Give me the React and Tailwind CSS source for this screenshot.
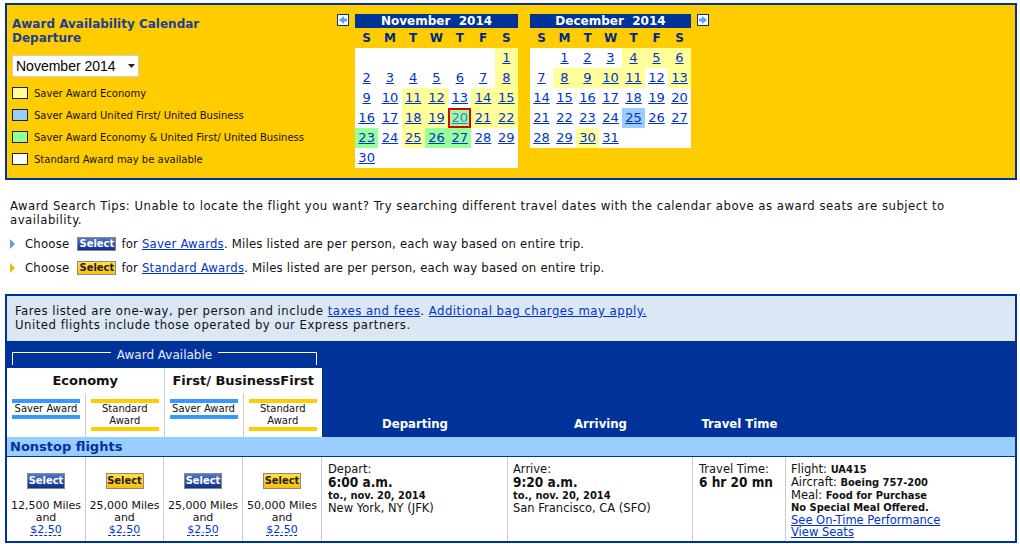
import React from 'react';

const verdana = "font-['DejaVu_Sans',Verdana,sans-serif]";
const tahoma = "font-['DejaVu_Sans_Condensed','DejaVu_Sans',sans-serif]";

const cellBg = { y: 'bg-[#ffff99]', g: 'bg-[#99ff99]', b: 'bg-[#99ccff]' };

const novColors = { 1: 'y', 8: 'y', 11: 'y', 12: 'y', 14: 'y', 15: 'y', 18: 'y', 19: 'y', 20: 'g', 21: 'y', 22: 'y', 23: 'g', 25: 'y', 26: 'g', 27: 'g' };
const decColors = { 4: 'y', 5: 'y', 6: 'y', 8: 'y', 9: 'y', 10: 'y', 11: 'y', 13: 'y', 25: 'b', 30: 'y' };

const NavArrow = ({ dir }) => (
  <svg width="12" height="12" viewBox="0 0 12 12" className="shrink-0">
    <rect x="0.5" y="0.5" width="11" height="11" fill="#ffffff" stroke="#003399" />
    {dir === 'left' ? (
      <polygon points="2,6 7,2 7,4.5 10,4.5 10,7.5 7,7.5 7,10" fill="#6699ff" />
    ) : (
      <polygon points="10,6 5,2 5,4.5 2,4.5 2,7.5 5,7.5 5,10" fill="#6699ff" />
    )}
  </svg>
);

const Month = ({ title, startDay, days, rows, colors, outline, width }) => {
  const cells = [];
  for (let i = 0; i < rows * 7; i++) {
    const d = i - startDay + 1;
    cells.push(d >= 1 && d <= days ? d : null);
  }
  return (
    <div className={width}>
      <div className={`h-[14px] bg-[#003399] text-white text-[12px] font-bold leading-[14px] text-center whitespace-pre ${verdana}`}>
        {title}
      </div>
      <div className={`grid grid-cols-7 h-[20px] items-center text-[12px] font-bold text-[#002a80] text-center ${verdana}`}>
        {['S', 'M', 'T', 'W', 'T', 'F', 'S'].map((n, i) => (
          <span key={i}>{n}</span>
        ))}
      </div>
      <div className={`grid grid-cols-7 bg-white ${verdana}`}>
        {cells.map((d, i) => {
          const marked = d !== null && d === outline;
          return (
            <div
              key={i}
              className={`h-[20px] text-center text-[13px] leading-[20px] ${d && colors[d] ? cellBg[colors[d]] : 'bg-white'} ${marked ? 'shadow-[inset_0_0_0_2px_#e00000]' : ''}`}
            >
              {d && <a className={`underline ${marked ? 'text-[#4a6fd6]' : 'text-[#0033cc]'}`}>{d}</a>}
            </div>
          );
        })}
      </div>
    </div>
  );
};

const Legend = ({ color, label }) => (
  <div className="flex items-center h-[22px] gap-[6px]">
    <span className={`w-[16px] h-[12px] border border-[#222] ${color}`} />
    <span className={`text-[10px] text-[#111] ${verdana}`}>{label}</span>
  </div>
);

const SelectBtn = ({ kind, small }) => {
  const base = small
    ? 'w-[39px] h-[14px] text-[11px] leading-[12px] ml-[8px] mr-[5px]'
    : 'w-[38px] h-[16px] text-[11px] leading-[14px]';
  const look =
    kind === 'blue'
      ? 'bg-linear-to-b from-[#5577c8] to-[#0d2f8f] text-white'
      : 'bg-linear-to-b from-[#ffe040] to-[#ffbf00] text-[#222]';
  return (
    <span className={`inline-block align-middle border border-[#8a8a8a] text-center font-bold tracking-normal ${tahoma} ${base} ${look}`}>
      Select
    </span>
  );
};

const Bar = ({ color }) => <div className={`h-[4px] ${color}`} />;

const MilesCell = ({ kind, miles }) => (
  <div className="flex flex-col items-center pt-[16px] border-r border-[#cccccc]">
    <SelectBtn kind={kind} />
    <div className={`mt-[11px] text-[11px] leading-[12px] text-center text-[#111] ${verdana}`}>
      <div>{miles} Miles</div>
      <div>and</div>
      <div className="text-[#0033cc] underline decoration-dashed underline-offset-2">$2.50</div>
    </div>
  </div>
);

const AwardSub = () => (
  <div className="flex-1 grid grid-cols-[79px_1fr]">
    <div className="border-r border-[#cccccc] px-[5px] pt-[5px] text-[10px] leading-[12px] text-center text-[#111]">
      <Bar color="bg-[#3399ff]" />
      <div>Saver Award</div>
      <Bar color="bg-[#3399ff]" />
    </div>
    <div className="px-[5px] pt-[5px] text-[10px] leading-[12px] text-center text-[#111]">
      <Bar color="bg-[#ffcc00]" />
      <div>Standard</div>
      <div>Award</div>
      <Bar color="bg-[#ffcc00]" />
    </div>
  </div>
);

const App = () => {
  return (
    <div className="w-[1020px] h-[544px] bg-white overflow-hidden">
      {/* award calendar */}
      <div className="ml-[5px] mt-[3px] w-[1012px] h-[177px] border-2 border-[#003399] bg-[#ffcc00] flex">
        <div className="w-[323px] pl-[5px] pt-[12px]">
          <div className={`text-[12px] font-bold leading-[14px] text-[#1c3f94] ${verdana}`}>
            <div>Award Availability Calendar</div>
            <div>Departure</div>
          </div>
          <div className="mt-[10px] w-[127px] h-[22px] bg-white border border-[#cfcfcf] flex items-center justify-between pl-[3px] pr-[3px]">
            <span className="text-[14px] text-black font-['Liberation_Sans',Arial,sans-serif]">November 2014</span>
            <svg width="7" height="4" viewBox="0 0 7 4">
              <polygon points="0,0 7,0 3.5,4" fill="#222" />
            </svg>
          </div>
          <div className="mt-[5px]">
            <Legend color="bg-[#ffff99]" label="Saver Award Economy" />
            <Legend color="bg-[#99ccff]" label="Saver Award United First/ United Business" />
            <Legend color="bg-[#99ff99]" label="Saver Award Economy & United First/ United Business" />
            <Legend color="bg-white" label="Standard Award may be available" />
          </div>
        </div>
        <div className="flex items-start pt-[9px]">
          <div className="ml-[7px]">
            <NavArrow dir="left" />
          </div>
          <div className="ml-[6px]">
            <Month title="November  2014" startDay={6} days={30} rows={6} colors={novColors} outline={20} width="w-[163px]" />
          </div>
          <div className="ml-[12px]">
            <Month title="December  2014" startDay={1} days={31} rows={5} colors={decColors} outline={null} width="w-[161px]" />
          </div>
          <div className="ml-[6px]">
            <NavArrow dir="right" />
          </div>
        </div>
      </div>

      {/* tips */}
      <div className={`pl-[10px] pr-[50px] mt-[19px] text-[13px] leading-[14px] text-[#111] ${tahoma}`}>
        <p className="tracking-[0.5px]">
          Award Search Tips: Unable to locate the flight you want? Try searching different travel dates with the calendar above as award seats are subject to availability.
        </p>
        <div className="mt-[7px] flex items-center h-[20px] tracking-[0.2px]">
          <svg width="6" height="10" viewBox="0 0 6 10" className="mr-[9px]">
            <polygon points="0,0 5,5 0,10" fill="#6f95e8" />
          </svg>
          <span>Choose</span>
          <SelectBtn kind="blue" small />
          <span>for <a className="text-[#0033cc] underline">Saver Awards</a>. Miles listed are per person, each way based on entire trip.</span>
        </div>
        <div className="mt-[4px] flex items-center h-[20px] tracking-[0.2px]">
          <svg width="6" height="10" viewBox="0 0 6 10" className="mr-[9px]">
            <polygon points="0,0 5,5 0,10" fill="#f5b800" />
          </svg>
          <span>Choose</span>
          <SelectBtn kind="yellow" small />
          <span>for <a className="text-[#0033cc] underline">Standard Awards</a>. Miles listed are per person, each way based on entire trip.</span>
        </div>
      </div>

      {/* results table */}
      <div className="ml-[5px] mt-[16px] w-[1012px] border-2 border-[#003399]">
        <div className={`h-[45px] bg-[#dce7f5] pl-[8px] pt-[8px] text-[13px] leading-[14px] tracking-[0.5px] text-[#111] ${tahoma}`}>
          <div>
            Fares listed are one-way, per person and include <a className="text-[#0033cc] underline">taxes and fees</a>.{' '}
            <a className="text-[#0033cc] underline">Additional bag charges may apply.</a>
          </div>
          <div>United flights include those operated by our Express partners.</div>
        </div>

        <div className="h-[96px] bg-[#003399] flex">
          <div className="w-[315px] flex flex-col">
            <div className="h-[27px] px-[5px] pt-[11px] flex items-start">
              <div className="flex-1 h-[13px] border-t border-l border-white" />
              <span className={`px-[6px] -mt-[4px] text-[12px] leading-[14px] text-[#e6ecff] ${verdana}`}>Award Available</span>
              <div className="flex-1 h-[13px] border-t border-r border-white" />
            </div>
            <div className={`flex-1 bg-white grid grid-cols-2 ${verdana}`}>
              <div className="flex flex-col border-r border-[#cccccc]">
                <div className="h-[26px] flex items-center justify-center text-[13px] font-bold text-[#111]">Economy</div>
                <AwardSub />
              </div>
              <div className="flex flex-col">
                <div className="h-[26px] flex items-center justify-center text-[13px] font-bold text-[#111]">First/ BusinessFirst</div>
                <AwardSub />
              </div>
            </div>
          </div>
          <div className={`flex-1 grid grid-cols-[186px_185px_93px_1fr] items-end pb-[4px] text-[13px] font-bold text-white ${tahoma}`}>
            <div className="text-center">Departing</div>
            <div className="text-center">Arriving</div>
            <div className="text-center">Travel Time</div>
            <div />
          </div>
        </div>

        <div className={`h-[20px] bg-[#99ccff] border-b border-[#003399] pl-[3px] text-[13px] leading-[19px] font-bold text-[#003399] ${verdana}`}>
          Nonstop flights
        </div>

        <div className="h-[84px] grid grid-cols-[79px_78px_79px_79px_186px_185px_93px_1fr]">
          <MilesCell kind="blue" miles="12,500" />
          <MilesCell kind="yellow" miles="25,000" />
          <MilesCell kind="blue" miles="25,000" />
          <MilesCell kind="yellow" miles="50,000" />
          <div className={`border-r border-[#cccccc] pl-[6px] pt-[6px] text-[11.5px] leading-[12px] text-[#111] ${verdana}`}>
            <div>Depart:</div>
            <div className={`text-[13.5px] leading-[15px] font-bold ${tahoma}`}>6:00 a.m.</div>
            <div className={`text-[11px] font-bold ${tahoma}`}>to., nov. 20, 2014</div>
            <div>New York, NY (JFK)</div>
          </div>
          <div className={`border-r border-[#cccccc] pl-[5px] pt-[6px] text-[11.5px] leading-[12px] text-[#111] ${verdana}`}>
            <div>Arrive:</div>
            <div className={`text-[13.5px] leading-[15px] font-bold ${tahoma}`}>9:20 a.m.</div>
            <div className={`text-[11px] font-bold ${tahoma}`}>to., nov. 20, 2014</div>
            <div>San Francisco, CA (SFO)</div>
          </div>
          <div className={`border-r border-[#cccccc] pl-[6px] pt-[6px] text-[11.5px] leading-[12px] text-[#111] ${verdana}`}>
            <div>Travel Time:</div>
            <div className={`text-[13.5px] leading-[15px] font-bold ${tahoma}`}>6 hr 20 mn</div>
          </div>
          <div className={`pl-[5px] pt-[6px] text-[11.5px] leading-[12px] text-[#111] ${verdana}`}>
            <div>Flight: <b className={`text-[11px] ${tahoma}`}>UA415</b></div>
            <div>Aircraft: <b className={`text-[11px] ${tahoma}`}>Boeing 757-200</b></div>
            <div>Meal: <b className={`text-[11px] ${tahoma}`}>Food for Purchase</b></div>
            <div className={`text-[11px] font-bold ${tahoma}`}>No Special Meal Offered.</div>
            <a className="block text-[#0033cc] underline">See On-Time Performance</a>
            <a className="block text-[#0033cc] underline">View Seats</a>
          </div>
        </div>
      </div>
    </div>
  );
};

export default App;
